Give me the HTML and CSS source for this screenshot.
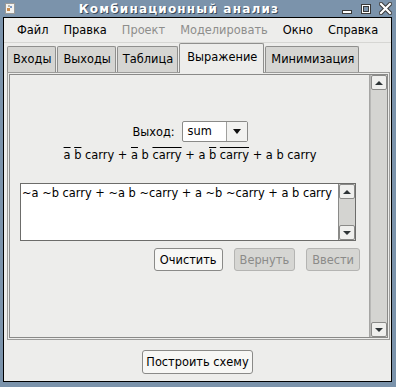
FILE: index.html
```html
<!DOCTYPE html>
<html lang="ru">
<head>
    <meta charset="UTF-8">
    <meta name="viewport" content="width=device-width, initial-scale=1.0">
    <title>Комбинационный анализ</title>
    <link rel="stylesheet" href="styles.css">
</head>
<body>
    <div class="window">
        <div class="titlebar">
            <svg class="app-icon" width="10" height="11" viewBox="0 0 10 11">
                <rect x="0.5" y="0.5" width="9" height="10" fill="#f2f2f0" stroke="#9a9a98"/>
                <rect x="2" y="5" width="3" height="3" fill="#c98a4a"/>
                <rect x="5" y="3" width="2" height="2" fill="#7a9ac8"/>
                <rect x="3" y="2" width="2" height="2" fill="#b8b8b0"/>
            </svg>
            <div class="title">Комбинационный анализ</div>
            <div class="wm-buttons">
                <svg width="12" height="12" viewBox="0 0 12 12">
                    <rect x="1.5" y="7.5" width="9" height="3" fill="#fff" stroke="#3a3a3a"/>
                </svg>
                <svg width="12" height="12" viewBox="0 0 12 12">
                    <rect x="1.5" y="1.5" width="9" height="9" fill="#fff" stroke="#3a3a3a"/>
                    <rect x="3.5" y="3.5" width="5" height="5" fill="#7b93ab" stroke="#3a3a3a"/>
                </svg>
                <svg width="13" height="13" viewBox="0 0 13 13">
                    <path d="M2 2 L11 11 M11 2 L2 11" stroke="#3a3a3a" stroke-width="4.2" stroke-linecap="square"/>
                    <path d="M2 2 L11 11 M11 2 L2 11" stroke="#fff" stroke-width="2.2" stroke-linecap="square"/>
                </svg>
            </div>
        </div>

        <div class="client">
            <div class="menubar">
                <span class="menu-item">Файл</span>
                <span class="menu-item">Правка</span>
                <span class="menu-item disabled">Проект</span>
                <span class="menu-item disabled">Моделировать</span>
                <span class="menu-item">Окно</span>
                <span class="menu-item">Справка</span>
            </div>

            <div class="tabs">
                <div class="tab">Входы</div>
                <div class="tab">Выходы</div>
                <div class="tab">Таблица</div>
                <div class="tab active">Выражение</div>
                <div class="tab">Минимизация</div>
            </div>

            <div class="tabpanel">
                <div class="scrollpane">
                    <div class="viewport">
                        <div class="output-row">
                            <span class="output-label">Выход:</span>
                            <div class="combo">
                                <span class="combo-value">sum</span>
                                <span class="combo-arrow"><span class="tri-down"></span></span>
                            </div>
                        </div>

                        <div class="formula">
                            <span class="neg">a</span> <span class="neg">b</span> carry +
                            <span class="neg">a</span> b <span class="neg">carry</span> +
                            a <span class="neg">b</span> <span class="neg">carry</span> +
                            a b carry
                        </div>

                        <div class="editor">
                            <div class="editor-text">~a ~b carry + ~a b ~carry + a ~b ~carry + a b carry</div>
                            <div class="vscroll small">
                                <div class="sb-btn"><span class="tri-up"></span></div>
                                <div class="sb-track"></div>
                                <div class="sb-btn"><span class="tri-down small-tri"></span></div>
                            </div>
                        </div>

                        <div class="editor-buttons">
                            <button class="btn">Очистить</button>
                            <button class="btn" disabled>Вернуть</button>
                            <button class="btn" disabled>Ввести</button>
                        </div>
                    </div>
                    <div class="vscroll">
                        <div class="sb-btn"><span class="tri-up"></span></div>
                        <div class="sb-track"></div>
                        <div class="sb-btn"><span class="tri-down small-tri"></span></div>
                    </div>
                </div>
            </div>

            <div class="footer">
                <button class="btn build">Построить схему</button>
            </div>
        </div>
    </div>
</body>
</html>
```

FILE: styles.css
```css
body {
    margin: 0;
    font-family: "DejaVu Sans", "Noto Sans", sans-serif;
    font-size: 11.4px;
    color: #000;
}
.window {
    width: 396px;
    height: 387px;
    background-color: #7b93ab;
    display: flex;
    flex-direction: column;
    box-sizing: border-box;
}
.titlebar {
    height: 17px;
    display: flex;
    align-items: center;
    padding: 0 4px 0 5px;
}
.app-icon {
    flex: none;
    margin-top: -1px;
}
.title {
    flex: 1;
    text-align: center;
    color: #fff;
    font-weight: bold;
    font-size: 12px;
    letter-spacing: 1.2px;
    text-shadow: 1px 1px 0 #3c4c5c;
    padding-left: 2px;
}
.wm-buttons {
    display: flex;
    gap: 7px;
    align-items: center;
}
.client {
    flex: 1;
    margin: 0 4px 5px 3px;
    border: 1px solid #000;
    background-color: #ededeb;
    display: flex;
    flex-direction: column;
}
.menubar {
    height: 24px;
    border-bottom: 1px solid #d6d6d3;
    display: flex;
    align-items: center;
    padding-left: 5px;
}
.menu-item {
    padding: 0 7px 0 8px;
}
.menu-item.disabled {
    color: #8e8e8c;
}
.tabs {
    height: 29px;
    display: flex;
    align-items: flex-end;
    padding-left: 3px;
    gap: 1px;
    position: relative;
    z-index: 1;
}
.tab {
    height: 25px;
    line-height: 25px;
    padding: 0 4px 0 5px;
    background-color: #d5d5d2;
    border: 1px solid #8f8f8d;
    border-bottom: none;
    border-radius: 2px 2px 0 0;
}
.tab.active {
    height: 29px;
    line-height: 26px;
    background-color: #ededeb;
    padding: 0 6px 0 7px;
    margin-bottom: -1px;
}
.tabpanel {
    height: 266px;
    margin: 0 1px 0 3px;
    border: 1px solid #9c9c9a;
    padding: 0;
    display: flex;
}
.scrollpane {
    flex: 1;
    margin: 1px;
    border: 1px solid #8a8a88;
    display: flex;
}
.viewport {
    flex: 1;
    padding: 46px 9px 0 10px;
    border-right: 1px solid #a5a5a3;
}
.output-row {
    display: flex;
    justify-content: center;
    align-items: center;
    gap: 7px;
}
.combo {
    width: 64px;
    height: 19px;
    border: 1px solid #8a8a88;
    border-radius: 2px;
    background-color: #fff;
    display: flex;
}
.combo-value {
    width: 38px;
    padding-left: 5px;
    line-height: 19px;
    border-right: 1px solid #a0a09e;
}
.combo-arrow {
    flex: 1;
    background-color: #f2f2f0;
    display: flex;
    align-items: center;
    justify-content: center;
}
.tri-down {
    width: 0;
    height: 0;
    border-left: 4px solid transparent;
    border-right: 4px solid transparent;
    border-top: 5px solid #111;
}
.tri-up {
    width: 0;
    height: 0;
    border-left: 4px solid transparent;
    border-right: 4px solid transparent;
    border-bottom: 4px solid #2e3436;
}
.tri-down.small-tri {
    border-top: 4px solid #2e3436;
}
.formula {
    margin-top: 6px;
    text-align: center;
    line-height: 15px;
}
.neg {
    text-decoration: overline;
}
.editor {
    margin: 20px 4px 0 0;
    height: 56px;
    border: 1px solid #6c6c6a;
    background-color: #fff;
    display: flex;
}
.editor-text {
    flex: 1;
    padding: 1px 1px;
    line-height: 16px;
}
.vscroll {
    width: 16px;
    display: flex;
    flex-direction: column;
    background-color: #d4d4d1;
    border-left: 1px solid #b8b8b6;
}
.vscroll.small {
    width: 16px;
    border-left: 1px solid #8a8a88;
}
.sb-btn {
    height: 13px;
    border: 1px solid #8a8a88;
    border-radius: 2px;
    background-color: #efefed;
    display: flex;
    align-items: center;
    justify-content: center;
}
.sb-track {
    flex: 1;
}
.editor-buttons {
    display: flex;
    justify-content: flex-end;
    gap: 11px;
    margin-top: 7px;
}
.btn {
    font-family: "DejaVu Sans", "Noto Sans", sans-serif;
    font-size: 11.4px;
    height: 23px;
    padding: 0 5px;
    background-color: #f7f7f5;
    color: #000;
    border: 1px solid #8a8a88;
    border-radius: 3px;
}
.btn:disabled {
    background-color: #d6d6d3;
    color: #8b8b89;
    border-color: #b4b4b2;
}
.footer {
    flex: 1;
    display: flex;
    justify-content: center;
    align-items: flex-start;
    padding-top: 10px;
}
.btn.build {
    height: 24px;
    padding: 0 3px;
}
```
